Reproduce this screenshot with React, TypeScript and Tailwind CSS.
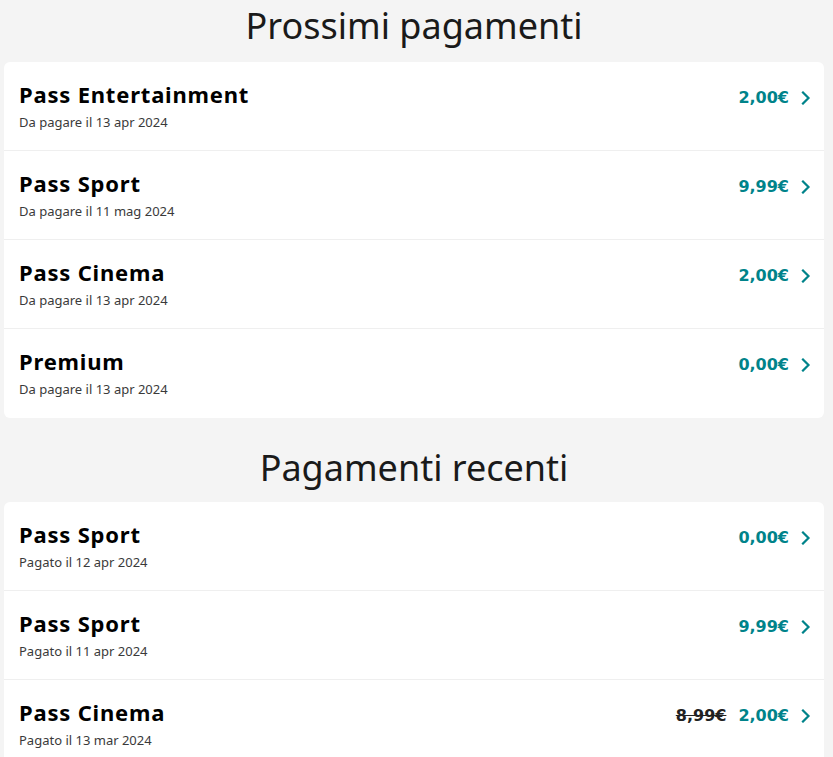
import React from "react";

type Pagamento = {
    nome: string;
    data: string;
    importo: string;
    vecchio?: string;
};

const prossimi: Pagamento[] = [
    { nome: "Pass Entertainment", data: "Da pagare il 13 apr 2024", importo: "2,00€" },
    { nome: "Pass Sport", data: "Da pagare il 11 mag 2024", importo: "9,99€" },
    { nome: "Pass Cinema", data: "Da pagare il 13 apr 2024", importo: "2,00€" },
    { nome: "Premium", data: "Da pagare il 13 apr 2024", importo: "0,00€" },
];

const recenti: Pagamento[] = [
    { nome: "Pass Sport", data: "Pagato il 12 apr 2024", importo: "0,00€" },
    { nome: "Pass Sport", data: "Pagato il 11 apr 2024", importo: "9,99€" },
    { nome: "Pass Cinema", data: "Pagato il 13 mar 2024", importo: "2,00€", vecchio: "8,99€" },
];

function Chevron() {
    return (
        <svg width="10" height="14" viewBox="0 0 10 14" fill="none" className="ml-[12px] translate-y-[2px]">
            <path d="M2 1.5l5.5 5.5-5.5 5.5" stroke="#00838a" strokeWidth="2.2" strokeLinecap="square" />
        </svg>
    );
}

function Riga({ p }: { p: Pagamento }) {
    return (
        <li className="flex flex-col h-[89px] pl-[15px] pr-[13px] pt-[17px] border-b border-[#efefef] last:border-b-0">
            <div className="flex items-baseline justify-between">
                <span className="text-[22px] leading-[30px] font-bold tracking-[0.8px] text-black font-['Noto_Sans']">{p.nome}</span>
                <div className="flex items-baseline">
                    {p.vecchio && (
                        <span className="text-[16px] font-bold text-[#222] line-through mr-[12px] font-['DejaVu_Sans']">{p.vecchio}</span>
                    )}
                    <span className="text-[16px] font-bold text-[#00838a] font-['DejaVu_Sans']">{p.importo}</span>
                    <Chevron />
                </div>
            </div>
            <span className="text-[13px] leading-[18px] mt-[3px] text-[#3a3a3a] font-['Noto_Sans']">{p.data}</span>
        </li>
    );
}

function Sezione({ titolo, items, first }: { titolo: string; items: Pagamento[]; first?: boolean }) {
    return (
        <section>
            <h2 className={`text-center text-[36px] text-[#1a1a1a] font-['Noto_Sans'] ${first ? "h-[62px] leading-[52px]" : "h-[84px] pt-[28px] leading-[44px]"}`}>
                {titolo}
            </h2>
            <ul className="bg-white rounded-[6px]">
                {items.map((p, i) => (
                    <Riga key={i} p={p} />
                ))}
            </ul>
        </section>
    );
}

export default function App() {
    return (
        <div className="min-h-screen bg-[#f4f4f4] pl-[4px] pr-[9px]">
            <Sezione titolo="Prossimi pagamenti" items={prossimi} first />
            <Sezione titolo="Pagamenti recenti" items={recenti} />
        </div>
    );
}
